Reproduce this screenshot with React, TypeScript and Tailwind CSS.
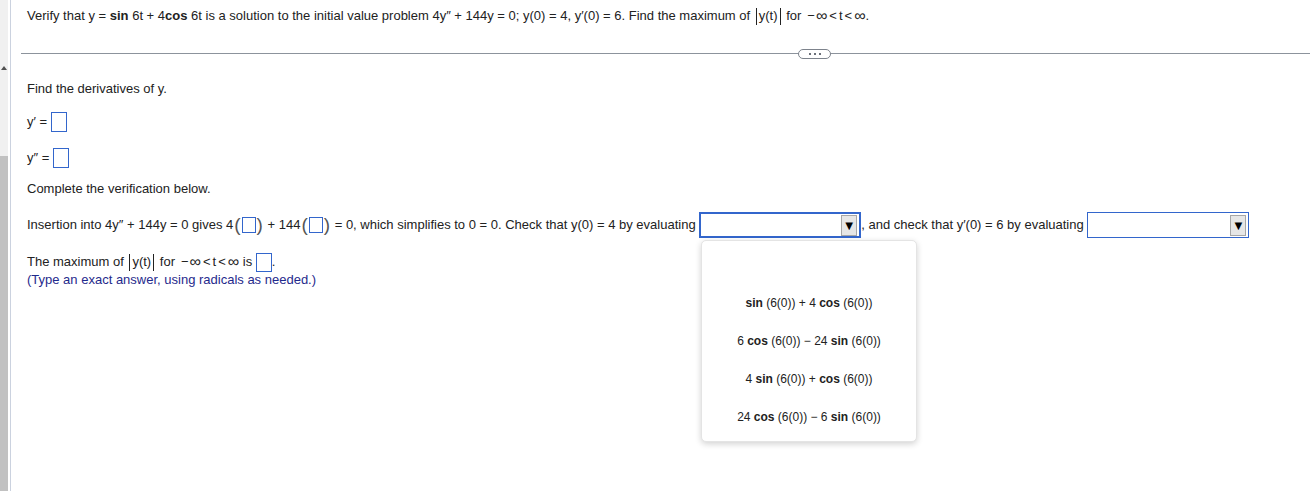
import React from "react";

const Box = ({ w = 16, h = 20 }: { w?: number; h?: number }) => (
  <span
    className="inline-block align-middle border border-[#3366cc] bg-white"
    style={{ width: w, height: h }}
  />
);

const Bar = () => <span className="inline-block align-middle w-px h-[17px] bg-[#222] mx-[2px]" />;

const Paren = ({ c }: { c: string }) => (
  <span className="inline-block align-middle text-[19px] leading-[18px] text-[#555] font-light mx-[1px]">{c}</span>
);

const B = ({ children }: { children: React.ReactNode }) => <b className="font-bold">{children}</b>;

const Inf = () => <span className="text-[16px] leading-[16px]">∞</span>;

const Range = () => (
  <span className="inline-flex items-center">
    <span className="ml-[6px] mr-[1px]">−</span>
    <Inf />
    <span className="mx-[2px]">&lt;</span>
    <span>t</span>
    <span className="mx-[2px]">&lt;</span>
    <Inf />
  </span>
);

const Dropdown = ({ focused }: { focused?: boolean }) => (
  <span
    className={
      "inline-flex align-middle items-center justify-end bg-white w-[162px] h-[26px] pr-[2px] " +
      (focused ? "border-2 border-[#3366cc]" : "border border-[#3366cc]")
    }
  >
    <span className="flex items-center justify-center w-[16px] h-[21px] bg-[#e6e6e6] border border-[#a6a6a6] text-[13px] leading-none text-black">
      ▼
    </span>
  </span>
);

export default function App() {
  return (
    <div className="w-[1310px] h-[491px] flex bg-white overflow-hidden text-[13px] leading-[16px] text-[#222] font-['Liberation_Sans',Arial,sans-serif]">
      <div className="w-[8px] flex flex-col bg-[#f0f0f0] shrink-0">
        <div className="h-[156px] pt-[66px] flex justify-center">
          <span className="block w-0 h-0 border-l-[3px] border-r-[3px] border-b-[4px] border-l-transparent border-r-transparent border-b-[#505050]" />
        </div>
        <div className="flex-1 bg-[#c1c1c1]" />
      </div>
      <div className="w-[2px] shrink-0" />
      <div className="w-px bg-[#cbd2df] shrink-0" />
      <div className="flex-1 pl-[10px]">
        <div className="pt-[8px] pl-[6px] whitespace-nowrap h-[24px] flex items-center">
          <span className="whitespace-pre">
            Verify that y = <B>sin</B> 6t + 4<B>cos</B> 6t is a solution to the initial value problem 4y″ + 144y = 0; y(0) = 4, y′(0) = 6. Find the maximum of{" "}
          </span>
          <Bar />
          <span>y(t)</span>
          <Bar />
          <span>&nbsp;for</span>
          <Range />
          <span>.</span>
        </div>
        <div className="mt-[29px] h-px bg-[#8c939c] relative">
          <span className="absolute left-[777px] top-[-4px] w-[33px] h-[10px] rounded-full border border-[#7d838c] bg-white flex items-center justify-center gap-[3px]">
            <span className="w-[2px] h-[2px] bg-[#6b7079]" />
            <span className="w-[2px] h-[2px] bg-[#6b7079]" />
            <span className="w-[2px] h-[2px] bg-[#6b7079]" />
          </span>
        </div>
        <div className="pl-[6px] whitespace-nowrap">
          <div className="mt-[27px]">Find the derivatives of y.</div>
          <div className="mt-[15px] h-[20px] flex items-center">
            <span>y′ =&nbsp;</span>
            <Box />
          </div>
          <div className="mt-[16px] h-[20px] flex items-center">
            <span>y″ =&nbsp;</span>
            <Box />
          </div>
          <div className="mt-[13px]">Complete the verification below.</div>
          <div className="mt-[15px] h-[26px] flex items-center">
            <span>Insertion into 4y″ + 144y = 0 gives 4</span>
            <Paren c="(" />
            <Box w={14} h={16} />
            <Paren c=")" />
            <span>&nbsp;+ 144</span>
            <Paren c="(" />
            <Box w={14} h={16} />
            <Paren c=")" />
            <span>&nbsp;= 0, which simplifies to 0 = 0. Check that y(0) = 4 by evaluating&nbsp;</span>
            <Dropdown focused />
            <span>, and check that y′(0) = 6 by evaluating&nbsp;</span>
            <Dropdown />
          </div>
          <div className="mt-[14px] h-[20px] flex items-center">
            <span>The maximum of&nbsp;</span>
            <Bar />
            <span>y(t)</span>
            <Bar />
            <span>&nbsp;for</span>
            <Range />
            <span>&nbsp;is&nbsp;</span>
            <Box w={16} h={19} />
            <span>.</span>
          </div>
          <div className="text-[#1f2a8c]">(Type an exact answer, using radicals as needed.)</div>
        </div>
      </div>
      <div className="absolute left-[701px] top-[240px] w-[216px] h-[202px] bg-white rounded-[5px] border border-[#e4e4e4] shadow-[0_2px_6px_rgba(0,0,0,0.18)] flex flex-col items-center pt-[54px] gap-[22px] text-[12px] leading-[16px] text-[#222]">
        <div>
          <B>sin</B> (6(0)) + 4 <B>cos</B> (6(0))
        </div>
        <div>
          6 <B>cos</B> (6(0)) − 24 <B>sin</B> (6(0))
        </div>
        <div>
          4 <B>sin</B> (6(0)) + <B>cos</B> (6(0))
        </div>
        <div>
          24 <B>cos</B> (6(0)) − 6 <B>sin</B> (6(0))
        </div>
      </div>
    </div>
  );
}
